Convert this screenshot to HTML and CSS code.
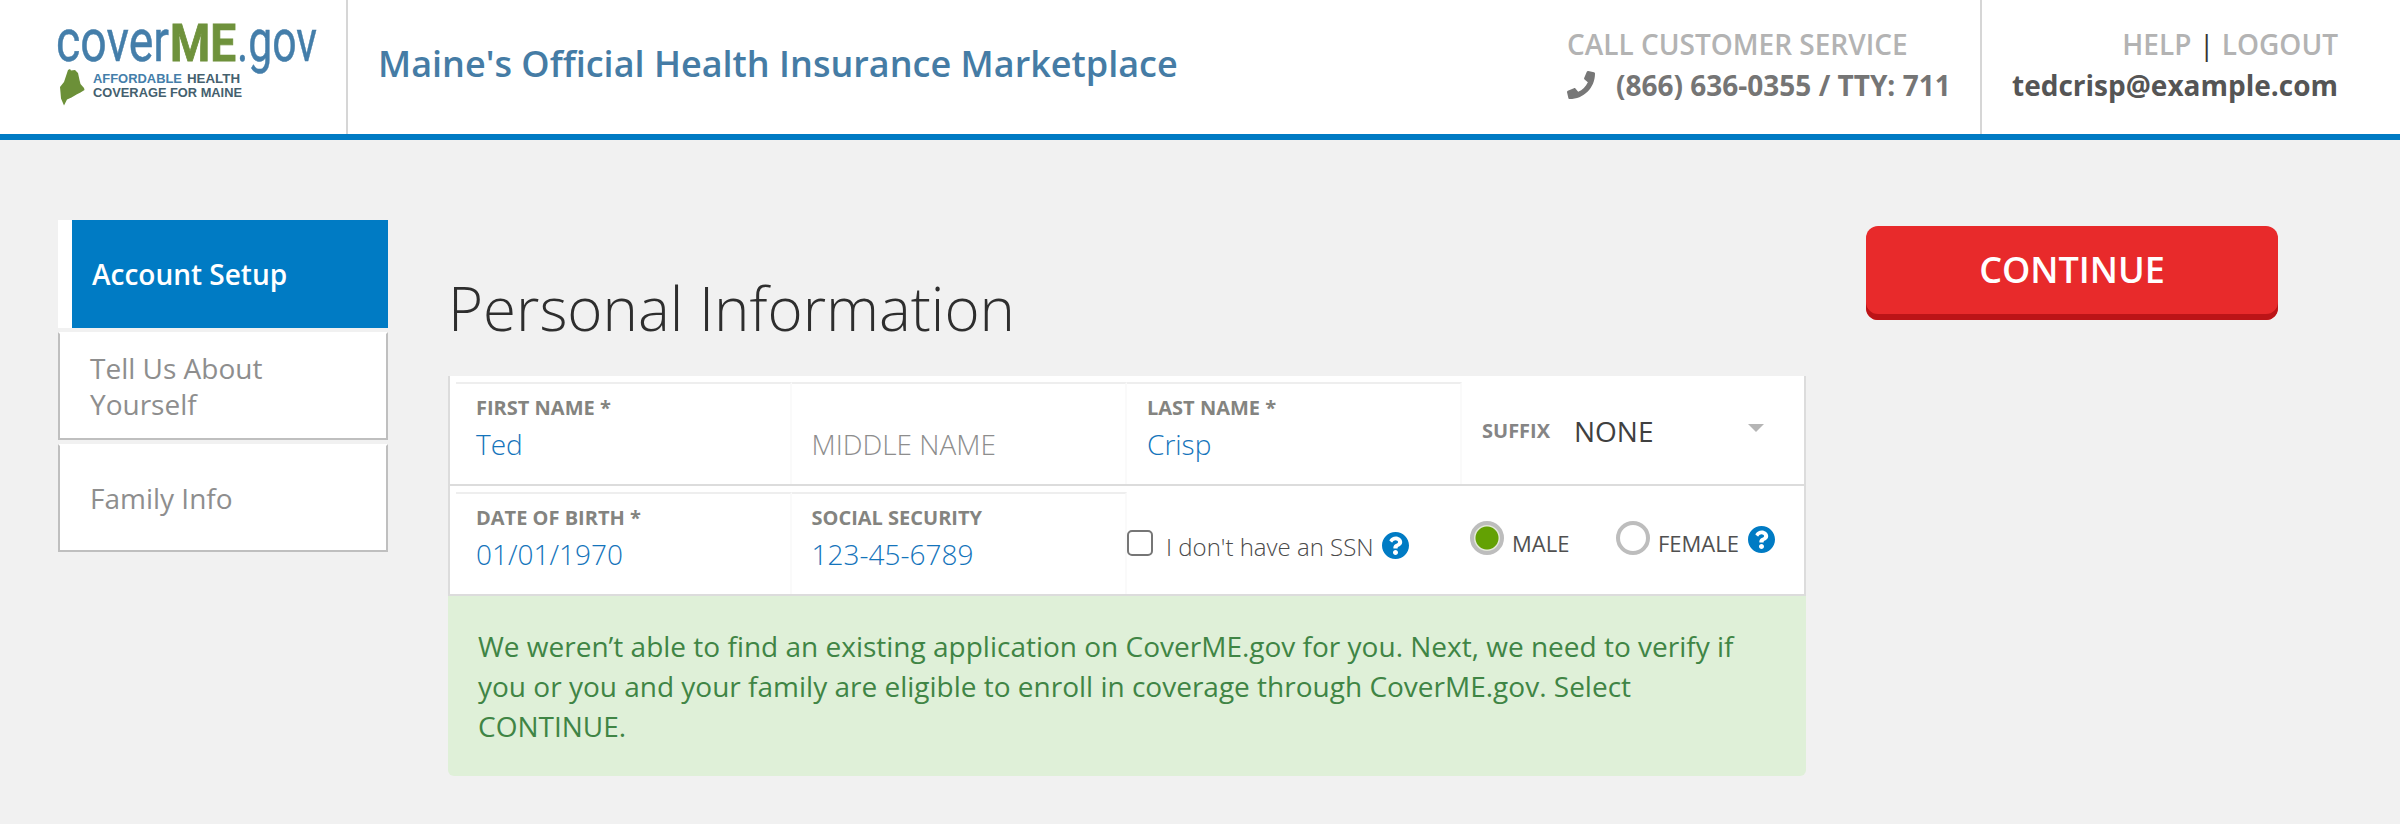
FILE: index.html
```html
<!DOCTYPE html>
<html lang="en">
<head>
<meta charset="utf-8">
<title>CoverME.gov - Personal Information</title>
<link rel="stylesheet" href="styles.css">
</head>
<body>
<header class="header">
  <a class="brand">
    <svg class="logo" width="288" height="134" viewBox="0 0 288 134" role="img" aria-label="CoverME.gov">
      <g class="wordmark">
        <text class="blue" x="-2" y="61" font-size="60" textLength="113" lengthAdjust="spacingAndGlyphs">cover</text>
        <text class="green" x="112" y="61" font-size="52" textLength="66" lengthAdjust="spacingAndGlyphs">ME</text>
        <text class="blue" x="179" y="61" font-size="60" textLength="80" lengthAdjust="spacingAndGlyphs">.gov</text>
      </g>
      <path class="maine" d="M2 87l4-5 4-12 2-1 1 1.500 4-.500 3 3 1.500 7 1 4 3.500 4 .5 2-4 2.500-4 2-5 3-4.500 2-3 6-3-7-.5-6z"/>
      <g class="tagline">
        <text class="blue" x="35" y="83" textLength="89" lengthAdjust="spacingAndGlyphs">AFFORDABLE</text>
        <text class="slate" x="129" y="83" textLength="53" lengthAdjust="spacingAndGlyphs">HEALTH</text>
        <text class="slate" x="35" y="97" textLength="149" lengthAdjust="spacingAndGlyphs">COVERAGE FOR MAINE</text>
      </g>
    </svg>
  </a>
  <div class="slogan">Maine's Official Health Insurance Marketplace</div>
  <div class="service">
    <div class="muted call">CALL CUSTOMER SERVICE</div>
    <div class="phone">
      <svg width="28" height="28" viewBox="0 0 512 512"><path fill="#777" d="M493.400 24.600l-104-24c-11.300-2.600-22.900 3.300-27.500 13.900l-48 112c-4.200 9.800-1.400 21.300 6.900 28l60.600 49.600c-36 76.700-98.900 140.500-177.200 177.200l-49.600-60.600c-6.800-8.300-18.200-11.100-28-6.900l-112 48C3.900 366.500-2 378.100.6 389.400l24 104C27.100 504.200 36.700 512 48 512c256.100 0 464-207.500 464-464 0-11.200-7.700-20.900-18.600-23.400z"/></svg>
      <span>(866) 636-0355 / TTY: 711</span>
    </div>
  </div>
  <div class="account">
    <div class="links"><span class="muted">HELP</span><span class="bar">|</span><span class="muted">LOGOUT</span></div>
    <div class="email">tedcrisp@example.com</div>
  </div>
</header>

<div class="page">
  <nav class="steps">
    <a class="step active">Account Setup</a>
    <a class="step">Tell Us About Yourself</a>
    <a class="step">Family Info</a>
  </nav>

  <main class="main">
    <h1 class="title">Personal Information</h1>
    <form class="panel">
      <div class="row">
        <div class="cell"><label class="label">FIRST NAME *</label><span class="value">Ted</span></div>
        <div class="cell"><label class="label"></label><span class="value placeholder">MIDDLE NAME</span></div>
        <div class="cell"><label class="label">LAST NAME *</label><span class="value">Crisp</span></div>
        <div class="suffix"><span class="suffix-label">SUFFIX</span><span class="suffix-value">NONE</span><i class="caret"></i></div>
      </div>
      <div class="row">
        <div class="cell"><label class="label">DATE OF BIRTH *</label><span class="value">01/01/1970</span></div>
        <div class="cell"><label class="label">SOCIAL SECURITY</label><span class="value">123-45-6789</span></div>
        <div class="no-ssn">
          <span class="checkbox"></span><span class="no-ssn-text">I don't have an SSN</span>
          <svg class="help" width="27" height="27" viewBox="8 8 496 496"><path fill="#007bc4" d="M504 256c0 137-111 248-248 248S8 393 8 256C8 119.100 119 8 256 8s248 111.100 248 248zM262.700 90c-54.500 0-89.300 23-116.500 63.800-3.500 5.300-2.400 12.400 2.700 16.300l34.700 26.300c5.200 3.900 12.600 3 16.700-2.100 17.900-22.700 30.100-35.800 57.300-35.800 20.400 0 45.700 13.100 45.700 33 0 15-12.400 22.700-32.500 34C247.100 238.500 216 254.900 216 296v4c0 6.600 5.400 12 12 12h56c6.600 0 12-5.400 12-12v-1.300c0-28.500 83.200-29.600 83.200-106.700 0-58-60.200-102-116.500-102zM256 338c-25.400 0-46 20.600-46 46s20.600 46 46 46 46-20.600 46-46-20.600-46-46-46z"/></svg>
        </div>
        <div class="gender">
          <span class="radio checked"></span><span class="radio-text male">MALE</span>
          <span class="radio"></span><span class="radio-text female">FEMALE</span>
          <svg class="help" width="27" height="27" viewBox="8 8 496 496"><path fill="#007bc4" d="M504 256c0 137-111 248-248 248S8 393 8 256C8 119.100 119 8 256 8s248 111.100 248 248zM262.700 90c-54.500 0-89.300 23-116.500 63.800-3.500 5.300-2.400 12.400 2.700 16.300l34.700 26.300c5.200 3.900 12.600 3 16.700-2.100 17.900-22.700 30.100-35.800 57.300-35.800 20.400 0 45.700 13.100 45.700 33 0 15-12.400 22.700-32.500 34C247.100 238.500 216 254.900 216 296v4c0 6.600 5.400 12 12 12h56c6.600 0 12-5.400 12-12v-1.300c0-28.500 83.200-29.600 83.200-106.700 0-58-60.200-102-116.500-102zM256 338c-25.400 0-46 20.600-46 46s20.600 46 46 46 46-20.600 46-46-20.600-46-46-46z"/></svg>
        </div>
      </div>
    </form>
    <div class="alert">We weren’t able to find an existing application on CoverME.gov for you. Next, we need to verify if you or you and your family are eligible to enroll in coverage through CoverME.gov. Select CONTINUE.</div>
  </main>

  <button class="continue" type="button">CONTINUE</button>
</div>
</body>
</html>
```

FILE: styles.css
```css
* { box-sizing: border-box; }

body {
  margin: 0;
  height: 824px;
  overflow: hidden;
  background: #f1f1f1;
  font-family: "Open Sans", "Noto Sans", sans-serif;
  font-size: 28px;
  color: #444;
}

/* Header */
.header {
  display: flex;
  height: 140px;
  background: #fff;
  border-bottom: 6px solid #007bc4;
}
.brand {
  width: 348px;
  padding-left: 58px;
  border-right: 2px solid #d6d6d6;
}
.logo { display: block; overflow: visible; }
.wordmark { font-family: Roboto, sans-serif; font-weight: 400; }
.wordmark .blue { stroke: #447eaa; stroke-width: .5px; }
.wordmark .green { stroke: #6f923c; stroke-width: .8px; }
.tagline { font-family: "Liberation Sans", sans-serif; font-size: 13.500px; font-weight: 700; }
.blue { fill: #447eaa; }
.green { fill: #6f923c; font-weight: 700; }
.slate { fill: #44606e; }
.maine { fill: #6c9038; }
.slogan {
  flex: 1;
  padding-left: 30px;
  line-height: 128px;
  font-size: 36px;
  font-weight: 600;
  color: #457ca5;
}
.service {
  width: 415px;
  padding: 24px 0 0;
  border-right: 2px solid #d6d6d6;
  line-height: 40px;
}
.muted { color: #b3b3b3; font-weight: 600; }
.phone {
  display: flex;
  align-items: center;
  gap: 21px;
  margin-top: 1px;
  font-weight: 700;
  color: #757575;
  white-space: nowrap;
}
.account {
  width: 418px;
  padding: 24px 62px 0 0;
  text-align: right;
  line-height: 40px;
}
.links { display: flex; justify-content: flex-end; gap: 7.500px; }
.bar { color: #333; }
.email { margin-top: 1px; font-weight: 700; color: #555; }

/* Page columns */
.page {
  display: grid;
  grid-template-columns: 330px 1358px 412px;
  column-gap: 60px;
  padding: 80px 0 0 58px;
  align-items: start;
}

/* Step navigation */
.steps { display: grid; gap: 4px; }
.step {
  display: flex;
  align-items: center;
  height: 108px;
  padding: 0 80px 0 30px;
  background: #fff;
  border: 2px solid #bfbfbf;
  border-top-color: #fff;
  line-height: 36px;
  color: #8e8e8e;
}
.step.active {
  padding-left: 20px;
  border: 0;
  border-left: 14px solid #fff;
  background: #007bc4;
  color: #fff;
  font-weight: 600;
}

/* Form */
.title {
  margin: 0;
  padding: 47px 0 27px;
  line-height: 82px;
  font-size: 60px;
  font-weight: 300;
  color: #2e2e2e;
}
.panel {
  border: 2px solid #dcdcdc;
  border-top: 0;
  background: #fff;
}
.row {
  display: grid;
  grid-template-columns: 335.500px 335.500px 335px 1fr;
  height: 110px;
  padding: 6px 0 0 6px;
  border-bottom: 2px solid #dcdcdc;
}
.row:last-child { height: 108px; border-bottom: 0; }
.cell {
  display: flex;
  flex-direction: column;
  gap: 4px;
  padding: 10px 0 0 20px;
  border-top: 2px solid #eee;
  border-right: 2px solid #fafafa;
}
.label {
  height: 28px;
  line-height: 28px;
  font-size: 20px;
  font-weight: 700;
  color: #848480;
}
.value { line-height: 36px; font-weight: 300; color: #1474bb; }
.placeholder { color: #8d8d8d; }
.suffix {
  display: flex;
  align-items: center;
  height: 98px;
  padding: 0 40px 0 20px;
}
.suffix-label { width: 92px; margin-top: -2px; font-size: 20px; font-weight: 700; color: #858585; }
.suffix-value { flex: 1; color: #404040; }
.caret {
  margin-top: -6px;
  border: 8px solid transparent;
  border-top-color: #b5b5b5;
  border-bottom: 0;
}
.no-ssn { display: flex; align-items: flex-start; padding-top: 38px; white-space: nowrap; }
.checkbox {
  width: 26px;
  height: 26px;
  border: 2px solid #767676;
  border-radius: 5px;
}
.no-ssn-text {
  width: 216px;
  margin: -1px 0 0 13px;
  line-height: 36px;
  font-size: 24px;
  font-weight: 300;
  color: #4a4a4a;
}
.no-ssn .help { margin-top: 2px; }
.gender { display: flex; align-items: flex-start; padding: 29px 0 0 8px; white-space: nowrap; }
.radio {
  width: 34px;
  height: 34px;
  border: 4px solid #bdbdbd;
  border-radius: 50%;
  background: #fff;
}
.radio.checked { background: radial-gradient(circle, #63a103 0 11px, #e3e8d8 12px); }
.radio-text { margin: 4px 0 0 8px; line-height: 36px; font-size: 22px; color: #505050; }
.male { width: 104px; }
.female { width: 90px; }
.gender .help { margin-top: 5px; }

.alert {
  height: 180px;
  padding: 30px 50px 0 30px;
  border-radius: 0 0 6px 6px;
  background: #dff0d8;
  line-height: 40px;
  color: #3f8545;
}

.continue {
  height: 94px;
  margin-top: 6px;
  padding: 0 0 7px;
  border: 0;
  border-radius: 12px;
  background: #e82a2b;
  box-shadow: inset 0 -6px #bb1417;
  font: 600 36px "Open Sans", "Noto Sans", sans-serif;
  color: #fff;
}
```
